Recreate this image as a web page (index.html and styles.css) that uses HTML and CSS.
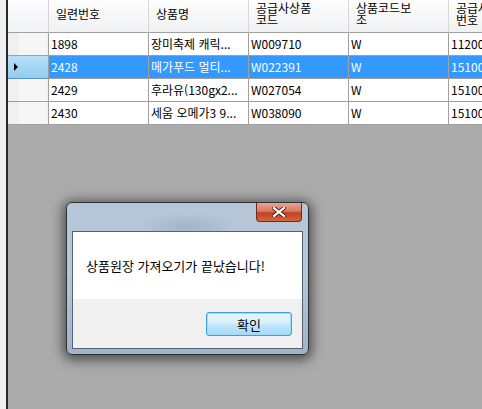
FILE: index.html
```html
<!DOCTYPE html>
<html lang="ko">
<head>
  <meta charset="UTF-8">
  <title>상품원장</title>
  <link rel="stylesheet" href="styles.css">
</head>
<body>

<div class="side"></div>

<main class="area">
  <div class="grid">
    <div class="row head">
      <div class="rh"></div>
      <div class="hc">일련번호</div>
      <div class="hc">상품명</div>
      <div class="hc wrap">공급사상품<br>코드</div>
      <div class="hc wrap">상품코드보<br>조</div>
      <div class="hc wrap">공급사<br>번호</div>
    </div>
    <div class="row">
      <div class="rh"></div>
      <div class="c">1898</div>
      <div class="c">장미축제 캐릭...</div>
      <div class="c">W009710</div>
      <div class="c">W</div>
      <div class="c">11200</div>
    </div>
    <div class="row sel">
      <div class="rh"><span class="arrow"></span></div>
      <div class="c">2428</div>
      <div class="c">메가푸드 멀티...</div>
      <div class="c">W022391</div>
      <div class="c">W</div>
      <div class="c">15100</div>
    </div>
    <div class="row">
      <div class="rh"></div>
      <div class="c">2429</div>
      <div class="c">후라유(130gx2...</div>
      <div class="c">W027054</div>
      <div class="c">W</div>
      <div class="c">15100</div>
    </div>
    <div class="row">
      <div class="rh"></div>
      <div class="c">2430</div>
      <div class="c">세움 오메가3 9...</div>
      <div class="c">W038090</div>
      <div class="c">W</div>
      <div class="c">15100</div>
    </div>
  </div>

  <!-- message box -->
  <div class="dlg" role="alertdialog">
    <div class="titlebar">
      <button class="close" aria-label="닫기">
        <svg width="14" height="10" viewBox="0 0 14 10">
          <path d="M2 1 L12 9 M12 1 L2 9" stroke="#5a1a10" stroke-width="4" stroke-linecap="square"/>
          <path d="M2 1 L12 9 M12 1 L2 9" stroke="#fff" stroke-width="2.2" stroke-linecap="square"/>
        </svg>
      </button>
    </div>
    <div class="client">
      <div class="msg">상품원장 가져오기가 끝났습니다!</div>
      <div class="foot">
        <button class="ok">확인</button>
      </div>
    </div>
  </div>
</main>

</body>
</html>
```

FILE: styles.css
```css
html, body { margin: 0; height: 100%; }
body {
  display: flex;
  background: #ababab;
  font-family: "Noto Sans CJK KR", "Liberation Sans", sans-serif;
  font-size: 12px;
  color: #000;
  overflow: hidden;
}

.side {
  width: 6px;
  background: #f0f0f0;
  border-right: 2px solid #2a2a2a;
  flex: none;
}

.area { position: relative; flex: 1; overflow: hidden; }

.grid { display: flex; flex-direction: column; width: 600px; background: #fff; }
.row { display: flex; height: 23px; }
.row.head { height: 33px; }

.rh {
  width: 41px;
  flex: none;
  box-sizing: border-box;
  border-right: 1px solid #a0a0a0;
  border-bottom: 1px solid #a0a0a0;
  background: linear-gradient(to right, #f0f0f0 0, #f0f0f0 11px, #f6f6f7 11px, #f6f6f7 39px, #f0f0f0 39px);
  display: flex;
  align-items: center;
}
.head .rh { background: linear-gradient(#fcfcfd, #f1f2f4); border-right-color: #d5d5d5; }

.hc, .c {
  width: 100px;
  flex: none;
  box-sizing: border-box;
  border-right: 1px solid #a0a0a0;
  border-bottom: 1px solid #a0a0a0;
  white-space: nowrap;
  overflow: hidden;
}
.hc {
  background: linear-gradient(#fdfdfd, #f0f1f3);
  border-right-color: #d8d8d8;
  border-bottom-color: #a0a0a0;
  padding: 7px 0 0 7px;
  line-height: 14px;
}
.hc.wrap { padding-top: 2px; line-height: 12px; }

.c { padding-left: 2px; line-height: 22px; }

.sel .c { background: #3399ff; color: #fff; }
.sel .rh {
  background: linear-gradient(#b7e0f7, #8fcdf2);
  border-bottom: 1px solid #5a93c0;
}
.arrow {
  margin-left: 6px;
  width: 0; height: 0;
  border-top: 4px solid transparent;
  border-bottom: 4px solid transparent;
  border-left: 4px solid #000;
}

/* dialog */
.dlg {
  position: absolute;
  left: 58px;
  top: 202px;
  width: 243px;
  height: 153px;
  box-sizing: border-box;
  border: 1px solid #2c3136;
  border-radius: 6px;
  background:
    radial-gradient(ellipse 50px 14px at 50% 24px, #a2b4c9, transparent),
    linear-gradient(#b6c6d7 0, #b7c7d8 70px, #9fb3ca 100%);
  box-shadow: 0 2px 12px 3px rgba(0, 0, 0, 0.55);
  display: flex;
  flex-direction: column;
  padding: 0 5px 5px 5px;
  font-size: 13px;
}
.titlebar { height: 28px; position: relative; }
.close {
  position: absolute;
  right: 1px;
  top: 0;
  width: 46px;
  height: 19px;
  padding: 0;
  border: 1px solid #6d2a20;
  border-top: none;
  border-radius: 0 0 4px 4px;
  background: linear-gradient(#e8a493 0, #d47b66 45%, #c4401f 55%, #d2683f 100%);
  display: flex;
  align-items: center;
  justify-content: center;
}
.client {
  flex: 1;
  border: 1px solid #54616f;
  background: #fff;
  display: flex;
  flex-direction: column;
}
.msg { height: 67px; box-sizing: border-box; padding: 26px 0 0 13px; line-height: 16px; }
.foot {
  flex: 1;
  background: #f0f0f0;
  display: flex;
  justify-content: flex-end;
  align-items: flex-start;
  padding: 13px 10px 0 0;
}
.ok {
  width: 86px;
  height: 24px;
  font-family: inherit;
  font-size: 13px;
  color: #000;
  border: 1px solid #3aa2de;
  border-radius: 3px;
  background: linear-gradient(#eaf6fd 0, #d9f0fc 45%, #bee6fd 55%, #a7d9f5 100%);
  box-shadow: inset 0 0 0 1px #9fdcf9;
  padding: 0;
}
```
